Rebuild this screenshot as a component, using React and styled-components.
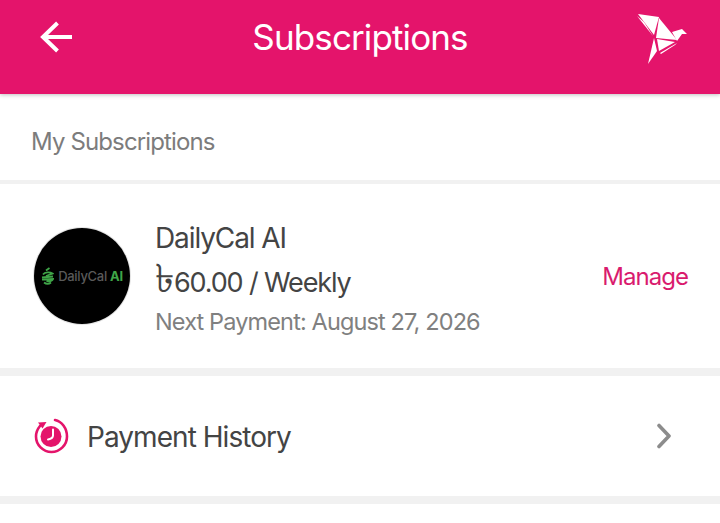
import styled, { createGlobalStyle } from "styled-components";

const GlobalStyle = createGlobalStyle`
  body {
    margin: 0;
    background: #fff;
    font-family: "Inter", "Noto Sans", sans-serif;
  }
`;

const Page = styled.div`
  width: 720px;
  height: 523px;
  overflow: hidden;
  background: #fff;
`;

const Header = styled.header`
  position: relative;
  z-index: 1;
  height: 94px;
  display: grid;
  grid-template-columns: 1fr auto 1fr;
  align-items: center;
  padding: 0 33px 20px;
  box-sizing: border-box;
  background: #e4146b;
  box-shadow: 0 1px 4px rgba(0, 0, 0, 0.25);
`;

const BackSlot = styled.div`
  height: 36px;
  margin-left: 6px;
`;

const Title = styled.h1`
  margin: 0;
  font-size: 35px;
  font-weight: 420;
  letter-spacing: -0.88px;
  color: #fff;
`;

const BirdSlot = styled.div`
  justify-self: end;
  height: 50px;
  margin-top: 4px;
`;

const SectionHead = styled.div`
  height: 86px;
  display: flex;
  align-items: center;
  padding: 9px 31px 0;
  box-sizing: border-box;
  font-size: 24px;
  font-weight: 420;
  letter-spacing: -0.87px;
  color: #7c7c7c;
`;

const Divider = styled.div`
  height: ${(props) => props.$size}px;
  background: #f1f1f1;
`;

const SubRow = styled.div`
  height: 184px;
  display: flex;
  align-items: center;
  padding: 0 32px 0 34px;
  box-sizing: border-box;
`;

const Logo = styled.div`
  width: 96px;
  height: 96px;
  margin-right: 25px;
  flex-shrink: 0;
  display: flex;
  align-items: center;
  justify-content: center;
  gap: 4px;
  border-radius: 50%;
  background: #000;
  box-shadow: 0 0 0 1px #e4e4e4;
`;

const LogoText = styled.span`
  font-size: 13px;
  font-weight: 500;
  letter-spacing: -0.3px;
  color: #5a5a5a;
`;

const LogoAccent = styled.b`
  font-weight: 700;
  color: #3fa548;
`;

const Info = styled.div`
  flex: 1;
  display: flex;
  flex-direction: column;
  padding-top: 2px;
`;

const Name = styled.div`
  font-size: 28px;
  font-weight: 420;
  line-height: 44px;
  letter-spacing: -1.1px;
  color: #444;
`;

const Price = styled.div`
  font-size: 27px;
  font-weight: 420;
  line-height: 45px;
  letter-spacing: -1.15px;
  color: #444;
`;

const Taka = styled.span`
  font-family: "DejaVu Sans", "Noto Sans", sans-serif;
  font-size: 39px;
  font-weight: 400;
  line-height: 0;
  letter-spacing: 0;
`;

const NextPayment = styled.div`
  font-size: 23.5px;
  line-height: 33px;
  letter-spacing: -0.87px;
  color: #808080;
`;

const Manage = styled.div`
  font-size: 24px;
  font-weight: 420;
  letter-spacing: -0.95px;
  color: #d91b6e;
`;

const HistoryRow = styled.div`
  height: 120px;
  display: flex;
  align-items: center;
  padding: 0 49px 0 34px;
  box-sizing: border-box;
`;

const HistoryLabel = styled.div`
  flex: 1;
  margin: 2px 0 0 18px;
  font-size: 28px;
  font-weight: 420;
  letter-spacing: -0.95px;
  color: #444;
`;

const BackIcon = () => (
  <svg width="36" height="36" viewBox="0 0 36 36" fill="none" stroke="#fff" strokeWidth="4">
    <path d="M33 18H4" />
    <path d="M18.500 4 4 18l14.500 14" />
  </svg>
);

const BirdIcon = () => (
  <svg width="50" height="50" viewBox="0 0 50 50" fill="#fff">
    <path d="M1 0 22 3 17 21Z" />
    <path d="M0 2 7 8 16 22Z" />
    <path d="M22 4 40 26 19 24Z" />
    <path d="M35 18 45 15 50 20 45 20 40 27Z" />
    <path d="M20 25 38 28 22 37Z" />
    <path d="M17 24 20 37 11 50Z" />
    <path d="M23 39 40 29 38 31 24 40Z" />
  </svg>
);

const AppleMark = () => (
  <svg width="13" height="18" viewBox="0 0 13 18" fill="none" stroke="#3fa548" strokeWidth="1.800">
    <path d="M5 3.500 8.500 1" />
    <path d="M2 7.500C4 4.800 9 4.800 11.500 6.500L5 9" />
    <path d="M1 10.500 12 9.500" />
    <path d="M1 12.500 12 12C11 14 8 14.500 5.500 14" />
    <path d="M3 15.500C5 17 8 17 10 15.500" />
  </svg>
);

const HistoryIcon = () => (
  <svg width="35" height="36" viewBox="0 0 35 36" fill="none">
    <circle cx="17" cy="18.500" r="10.500" fill="#e4146b" />
    <path d="M19 11.500v6c0 2.500-2.500 3.500-5 4" stroke="#fff" strokeWidth="2" strokeLinecap="round" />
    <path d="M21 2C28 3.500 33 10.500 33 18.500 33 27 26 34 17.500 34S2 27 2 18.500C2 14.500 3.500 11 6 8" stroke="#e4146b" strokeWidth="2.600" strokeLinecap="round" />
    <path d="M4 4.500 12.500 4 8.500 10.500Z" fill="#e4146b" />
  </svg>
);

const ChevronIcon = () => (
  <svg width="14" height="26" viewBox="0 0 14 26" fill="none" stroke="#8c8c8c" strokeWidth="3.600" strokeLinecap="round" strokeLinejoin="round">
    <path d="M2 2.500 12 13 2 23.500" />
  </svg>
);

export default function App() {
  return (
    <Page>
      <GlobalStyle />
      <Header>
        <BackSlot>
          <BackIcon />
        </BackSlot>
        <Title>Subscriptions</Title>
        <BirdSlot>
          <BirdIcon />
        </BirdSlot>
      </Header>
      <SectionHead>My Subscriptions</SectionHead>
      <Divider $size={4} />
      <SubRow>
        <Logo>
          <AppleMark />
          <LogoText>
            DailyCal <LogoAccent>AI</LogoAccent>
          </LogoText>
        </Logo>
        <Info>
          <Name>DailyCal AI</Name>
          <Price>
            <Taka>৳</Taka>60.00 / Weekly
          </Price>
          <NextPayment>Next Payment: August 27, 2026</NextPayment>
        </Info>
        <Manage>Manage</Manage>
      </SubRow>
      <Divider $size={8} />
      <HistoryRow>
        <HistoryIcon />
        <HistoryLabel>Payment History</HistoryLabel>
        <ChevronIcon />
      </HistoryRow>
      <Divider $size={8} />
    </Page>
  );
}
